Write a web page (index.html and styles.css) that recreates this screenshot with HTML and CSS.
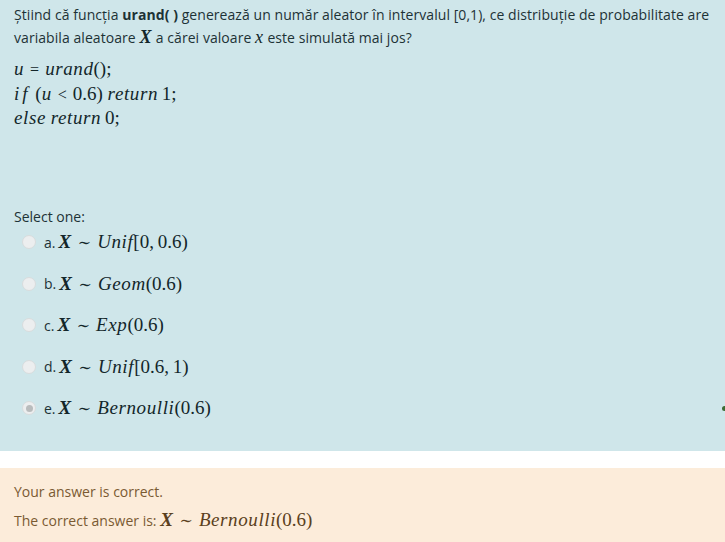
FILE: index.html
```html
<!DOCTYPE html>
<html lang="ro">
<head>
<meta charset="utf-8">
<link rel="stylesheet" href="styles.css">
</head>
<body>
<div class="que">
  <div class="formulation">
    <div class="qtext">
      <p class="intro">Știind că funcția <b>urand( )</b> generează un număr aleator în intervalul [0,1), ce distribuție de probabilitate are variabila aleatoare <span class="m"><i class="mx">X</i></span> a cărei valoare <span class="m"><i>x</i></span> este simulată mai jos?</p>
      <div class="code">
        <div class="line m"><i>u</i><span class="op">=</span><i>urand</i>();</div>
        <div class="line m"><i class="sp">if</i> (<i>u</i><span class="op">&lt;</span>0.6) <i>return</i>&#8201;1;</div>
        <div class="line m"><i>else</i> <i>return</i>&#8201;0;</div>
      </div>
    </div>
    <div class="ablock">
      <div class="prompt">Select one:</div>
      <div class="answer">
        <div class="opt"><span class="radio"></span><span class="lbl">a. </span><span class="m"><i class="mx">X</i><span class="op">∼</span><i>Unif</i>[0,&#8201;0.6)</span></div>
        <div class="opt"><span class="radio"></span><span class="lbl">b. </span><span class="m"><i class="mx">X</i><span class="op">∼</span><i>Geom</i>(0.6)</span></div>
        <div class="opt"><span class="radio"></span><span class="lbl">c. </span><span class="m"><i class="mx">X</i><span class="op">∼</span><i>Exp</i>(0.6)</span></div>
        <div class="opt"><span class="radio"></span><span class="lbl">d. </span><span class="m"><i class="mx">X</i><span class="op">∼</span><i>Unif</i>[0.6,&#8201;1)</span></div>
        <div class="opt"><span class="radio checked"></span><span class="lbl">e. </span><span class="m"><i class="mx">X</i><span class="op">∼</span><i>Bernoulli</i>(0.6)</span><span class="mark"></span></div>
      </div>
    </div>
  </div>
  <div class="outcome">
    <div class="feedback">Your answer is correct.</div>
    <div class="right">The correct answer is: <span class="m"><i class="mx">X</i><span class="op">∼</span><i>Bernoulli</i>(0.6)</span></div>
  </div>
</div>
</body>
</html>
```
FILE: styles.css
```css
html, body {
  margin: 0;
  padding: 0;
  background: #ffffff;
}
body {
  font-family: "Open Sans", "Liberation Sans", sans-serif;
  font-size: 14px;
  color: #1d3236;
  width: 725px;
  height: 542px;
  overflow: hidden;
}
.que {
  display: flex;
  flex-direction: column;
}
.formulation {
  background: #cfe6ea;
  padding: 3px 14px 0 14px;
  height: 448px;
  position: relative;
}
.intro {
  margin: 0;
  line-height: 23px;
  letter-spacing: 0.06px;
}
.intro b {
  font-weight: 700;
}
.intro .m {
  line-height: 0;
  font-size: 18px;
}
.m {
  font-family: "Liberation Serif", "DejaVu Serif", serif;
  font-size: 19px;
  color: #13262a;
}
.m i {
  font-style: italic;
  letter-spacing: 0.6px;
}
.mx {
  font-weight: 700;
}
.m i.sp {
  letter-spacing: 3px;
}
.op {
  font-style: normal;
  font-size: 16px;
  margin: 0 6px;
}
.code {
  margin-top: 8px;
}
.line {
  line-height: 23.5px;
}
.ablock {
  margin-top: 75px;
}
.prompt {
  line-height: 23px;
}
.answer {
  display: flex;
  flex-direction: column;
  padding-left: 8px;
}
.opt {
  display: flex;
  align-items: center;
  height: 41.5px;
}
.opt:first-child {
  margin-top: -6px;
}
.radio {
  width: 12px;
  height: 12px;
  border-radius: 50%;
  background: #eceeef;
  border: 1px solid #d8dcdd;
  margin-right: 8px;
  display: inline-flex;
  align-items: center;
  justify-content: center;
  box-sizing: content-box;
}
.radio.checked::after {
  content: "";
  width: 7px;
  height: 7px;
  border-radius: 50%;
  background: #b9bcbd;
}
.lbl {
  margin-right: 3px;
}
.mark {
  position: absolute;
  right: -2px;
  width: 5px;
  height: 5px;
  border-radius: 50%;
  background: #3d6b35;
}
.outcome {
  margin-top: 17px;
  background: #fcecda;
  color: #7a5a32;
  padding: 12px 14px 10px 14px;
  height: 74px;
  box-sizing: border-box;
}
.feedback {
  line-height: 24px;
}
.right {
  margin-top: 4px;
  line-height: 24px;
}
.right .m {
  color: #5a4020;
}
```
